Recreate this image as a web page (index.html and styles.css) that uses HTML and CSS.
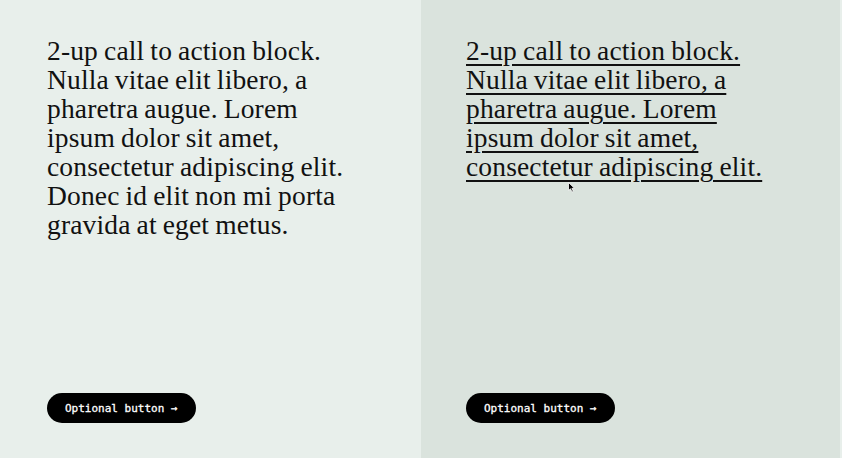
FILE: index.html
```html
<!DOCTYPE html>
<html lang="en">
<head>
<meta charset="utf-8">
<title>2-up CTA</title>
<link rel="stylesheet" href="styles.css">
</head>
<body>
<div class="grid">
  <section class="panel panel-light">
    <p class="lead">2-up call to action block. Nulla vitae elit libero, a pharetra augue. Lorem ipsum dolor sit amet, consectetur adipiscing elit. Donec id elit non mi porta gravida at eget metus.</p>
    <a class="btn" href="#">Optional button →</a>
  </section>
  <section class="panel panel-dark">
    <p class="lead"><a class="lead-link" href="#">2-up call to action block. Nulla vitae elit libero, a pharetra augue. Lorem ipsum dolor sit amet, consectetur adipiscing elit.</a></p>
    <svg class="cursor" width="8" height="11" viewBox="0 0 8 11"><path d="M0.5 0.5 L0.5 8.5 L2.5 6.8 L4 10 L5.3 9.4 L3.9 6.3 L6.5 6.3 Z" fill="#000" stroke="#fff" stroke-width="0.8"/></svg>
    <a class="btn" href="#">Optional button →</a>
  </section>
  <div class="edge"></div>
</div>
</body>
</html>
```

FILE: styles.css
```css
html, body {
  margin: 0;
  padding: 0;
  background: #e8efeb;
}
.grid {
  display: grid;
  grid-template-columns: 421px 419px 2px;
  height: 458px;
}
.panel {
  position: relative;
  display: flex;
  flex-direction: column;
  justify-content: space-between;
  align-items: flex-start;
  padding: 36px 0 35px 47px;
  box-sizing: border-box;
}
.panel-light { background: #e8efeb; }
.panel-dark { background: #dae3dd; padding-left: 45px; }
.edge { background: #e8efeb; }
.lead {
  margin: 0;
  width: 306px;
  font-family: "Liberation Serif", serif;
  font-size: 27.5px;
  line-height: 29px;
  color: #111;
  letter-spacing: 0.15px;
  word-spacing: -1px;
}
.lead-link {
  color: #111;
  text-decoration: underline;
  text-decoration-thickness: 1.5px;
  text-underline-offset: 4px;
}
.btn {
  display: inline-flex;
  align-items: center;
  height: 30px;
  padding: 0 18px;
  border-radius: 15px;
  background: #000;
  color: #fff;
  font-family: "DejaVu Sans Mono", monospace;
  font-weight: normal;
  font-size: 11px;
  -webkit-text-stroke: 0.3px #fff;
  text-decoration: none;
  box-sizing: border-box;
}
.cursor {
  position: absolute;
  left: 147px;
  top: 182px;
}
```
